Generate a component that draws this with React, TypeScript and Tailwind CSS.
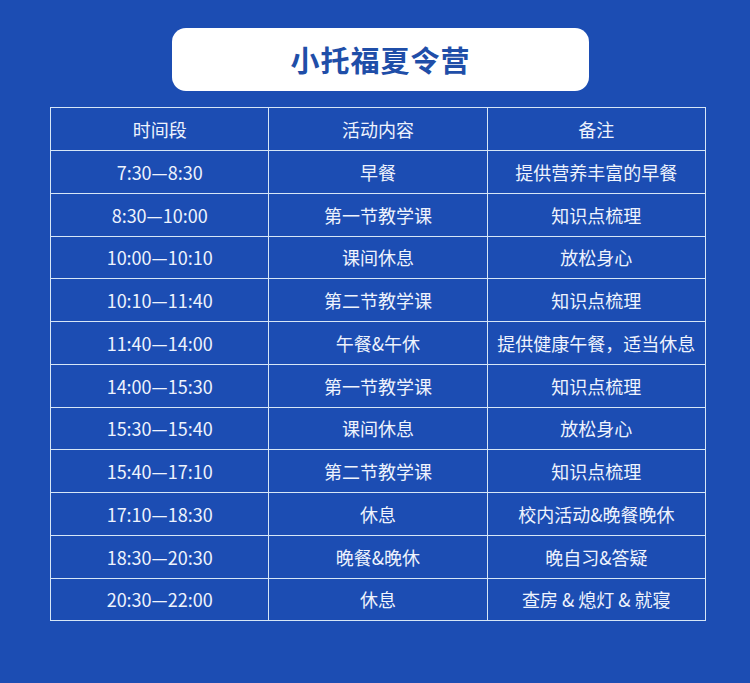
const rows = [
  ["7:30—8:30", "早餐", "提供营养丰富的早餐"],
  ["8:30—10:00", "第一节教学课", "知识点梳理"],
  ["10:00—10:10", "课间休息", "放松身心"],
  ["10:10—11:40", "第二节教学课", "知识点梳理"],
  ["11:40—14:00", "午餐&午休", "提供健康午餐，适当休息"],
  ["14:00—15:30", "第一节教学课", "知识点梳理"],
  ["15:30—15:40", "课间休息", "放松身心"],
  ["15:40—17:10", "第二节教学课", "知识点梳理"],
  ["17:10—18:30", "休息", "校内活动&晚餐晚休"],
  ["18:30—20:30", "晚餐&晚休", "晚自习&答疑"],
  ["20:30—22:00", "休息", "查房 & 熄灯 & 就寝"],
];

const font = { fontFamily: '"Noto Sans CJK SC", "Noto Sans", sans-serif' };

export default function App() {
  return (
    <div className="h-[683px] w-[750px] overflow-hidden bg-[#1c4db3] pt-[28px]" style={font}>
      <div className="ml-[172px] flex h-[63px] w-[417px] items-center justify-center rounded-[14px] bg-white">
        <span className="text-[29px] font-bold tracking-[1px] text-[#1f4ea8]">小托福夏令营</span>
      </div>
      <table className="ml-[50px] mt-[16px] w-[656px] table-fixed border-collapse text-center text-[18px] text-[#eef3fd]">
        <thead>
          <tr className="h-[43px]">
            <th className="border border-[#d6e6f7] p-0 font-normal">时间段</th>
            <th className="border border-[#d6e6f7] p-0 font-normal">活动内容</th>
            <th className="border border-[#d6e6f7] p-0 font-normal">备注</th>
          </tr>
        </thead>
        <tbody>
          {rows.map((r, i) => (
            <tr key={i} className="h-[42.75px]">
              {r.map((c, j) => (
                <td key={j} className="border border-[#d6e6f7] p-0 whitespace-nowrap leading-none">
                  {c}
                </td>
              ))}
            </tr>
          ))}
        </tbody>
      </table>
    </div>
  );
}
